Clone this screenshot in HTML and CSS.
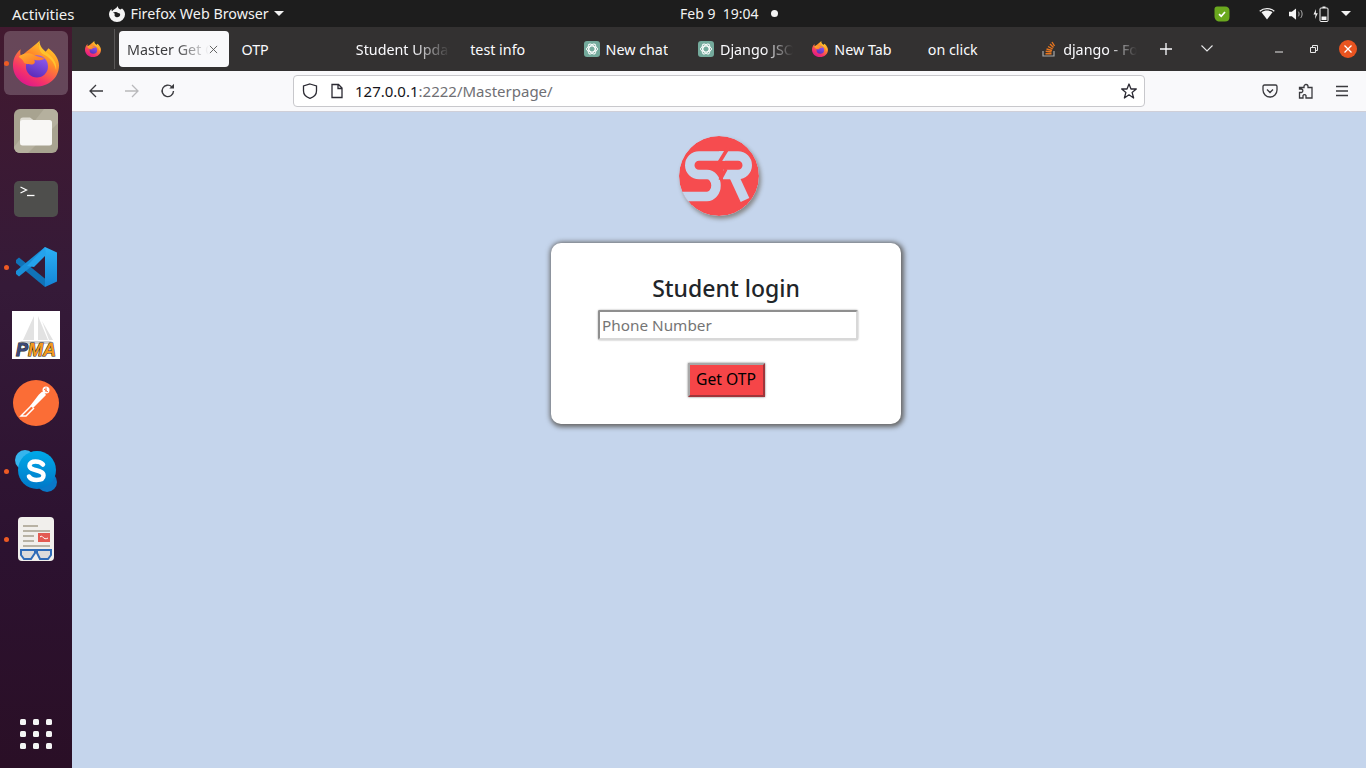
FILE: index.html
```html
<!DOCTYPE html>
<html lang="en">
<head>
    <meta charset="UTF-8">
    <title>Master Get OTP</title>
    <link rel="stylesheet" href="styles.css">
</head>
<body>
    <svg class="icon-defs" aria-hidden="true">
        <defs>
            <linearGradient id="fxBody" x1="0.85" y1="0" x2="0.25" y2="1">
                <stop offset="0" stop-color="#ffe226"/>
                <stop offset="0.4" stop-color="#ff8a2b"/>
                <stop offset="0.75" stop-color="#f5336a"/>
                <stop offset="1" stop-color="#d9158f"/>
            </linearGradient>
            <linearGradient id="fxGlobe" x1="0.7" y1="0" x2="0.3" y2="1">
                <stop offset="0" stop-color="#8f5cf0"/>
                <stop offset="1" stop-color="#5a2bb8"/>
            </linearGradient>
            <linearGradient id="fxTail" x1="0" y1="0" x2="1" y2="1">
                <stop offset="0" stop-color="#ffb52e"/>
                <stop offset="1" stop-color="#ff6a2b"/>
            </linearGradient>
            <linearGradient id="vsDark" x1="0" y1="0" x2="0" y2="1">
                <stop offset="0" stop-color="#2bb0f5"/>
                <stop offset="1" stop-color="#1484d6"/>
            </linearGradient>
            <linearGradient id="skypeBg" x1="0" y1="0" x2="0" y2="1">
                <stop offset="0" stop-color="#00a9e8"/>
                <stop offset="1" stop-color="#0078c8"/>
            </linearGradient>
            <symbol id="firefox" viewBox="0 0 48 48">
                <path fill="url(#fxBody)" d="M28 0C25 6 29 10 33 13L37 8C44 13 48 20 48 26C48 39 37 48 24 48C10 48 0 38 0 26C0 20 2 14 8 9C7 13 8 16 9 17C12 12 20 8 28 0Z"/>
                <path fill="#ffc22e" d="M28 0C27 6 32 10 37 14C43 19 46 24 45 31C43 22 38 17 31 14C27 11 26 5 28 0Z"/>
                <circle cx="25" cy="27" r="11.5" fill="url(#fxGlobe)"/>
                <path fill="url(#fxTail)" d="M6 17C10 13 17 12 22 15C26 17 31 17 33 19C29 21 25 21 22 20C24 23 22 25 19 25C15 25 11 24 11 22C10 20 7 18 6 17Z"/>
            </symbol>
            <symbol id="chatgpt" viewBox="0 0 16 16">
                <rect width="16" height="16" rx="3" fill="#74aa9c"/>
                <g fill="none" stroke="#fff" stroke-width="1">
                    <ellipse cx="8" cy="8" rx="5.5" ry="3"/>
                    <ellipse cx="8" cy="8" rx="5.5" ry="3" transform="rotate(60 8 8)"/>
                    <ellipse cx="8" cy="8" rx="5.5" ry="3" transform="rotate(120 8 8)"/>
                </g>
            </symbol>
        </defs>
    </svg>

    <header class="topbar">
        <span class="activities">Activities</span>
        <div class="app-menu">
            <svg class="app-glyph" viewBox="0 0 16 16"><path fill="#f4f4f4" d="M9 0C8.500 2 10 3 11.500 3.500L13 2.500C15 4 16 6 16 8.500A8 7.500 0 0 1 0 8.500C0 6.500 .8 4.500 2.500 3C2.400 4 2.600 4.800 3 5.200C4.500 3.500 7 2.500 9 0Z"/><path fill="#1d1d1d" d="M4 6.500C6 5.500 8 6 9 7C11 7 11.500 8 11 9.500C10.500 11 8.500 11.500 7 11C5.500 10.500 5 8.500 6 8C5.500 7.500 4.800 7 4 6.500Z"/></svg>
            <span>Firefox Web Browser</span>
            <i class="caret"></i>
        </div>
        <div class="clock"><span>Feb 9&nbsp;&nbsp;19:04</span><i class="clock-dot"></i></div>
        <div class="tray">
            <svg class="tray-shield" viewBox="0 0 16 16"><path fill="#6aa81e" d="M3 .5H11C14 .5 15.500 2 15.500 5V11C15.500 14 14 15.500 11 15.500H6C2.500 15.500 .5 13.500 .5 10V3C.5 1.500 1.500 .5 3 .5Z"/><path fill="none" stroke="#fff" stroke-width="1.700" d="M5 8.200L7.200 10.200L11 6"/></svg>
            <svg class="tray-wifi" viewBox="0 0 16 14"><path fill="none" stroke="#f4f4f4" stroke-width="1.300" d="M.7 4.200C4.800 .7 11.200 .7 15.300 4.200"/><path fill="#f4f4f4" d="M2.500 5.300C5.800 2.800 10.200 2.800 13.500 5.300L8 12.500Z"/></svg>
            <svg class="tray-vol" viewBox="0 0 16 14"><path fill="#f4f4f4" d="M0 4.500H3L7.500 1V13L3 9.500H0Z"/><path fill="none" stroke="#b5b5b5" stroke-width="1" d="M10 4.500C11 6 11 8 10 9.500M12.500 2.800C14.500 5 14.500 9 12.500 11.200"/></svg>
            <svg class="tray-batt" viewBox="0 0 16 16"><path fill="#f4f4f4" d="M3 3L.5 8.500H2.500L2 13L4.800 7.200H2.800Z"/><rect x="7" y="2" width="8" height="13.500" rx="1" fill="none" stroke="#f4f4f4"/><rect x="9.500" y=".5" width="3" height="1.500" fill="#f4f4f4"/><rect x="8.500" y="10.500" width="5" height="3.500" fill="#f4f4f4"/></svg>
            <i class="caret"></i>
        </div>
    </header>

    <div class="desktop">
        <nav class="dock">
            <div class="dock-item active">
                <i class="run-dot"></i>
                <svg class="ic-firefox"><use href="#firefox"/></svg>
            </div>
            <div class="dock-item">
                <svg class="ic-files" viewBox="0 0 44 44">
                    <rect width="44" height="44" rx="6" fill="#a8a390"/>
                    <path d="M30 0H38A6 6 0 0 1 44 6V14L14 44H6A6 6 0 0 1 0 38Z" fill="#b5b09e"/>
                    <path fill="#dedbd2" d="M6 12C6 9.500 7 8.500 9 8.500H16L20 11.500V20H6Z"/>
                    <rect x="6" y="11" width="32" height="25.500" rx="2.500" fill="#f8f7f5"/>
                </svg>
            </div>
            <div class="dock-item">
                <svg class="ic-term" viewBox="0 0 44 36">
                    <rect width="44" height="36" rx="5" fill="#4e4e4c"/>
                    <path d="M6.500 6L12.500 9L6.500 12" fill="none" stroke="#fff" stroke-width="1.300"/>
                    <path d="M13 14.500H20.500" stroke="#fff" stroke-width="1.300"/>
                </svg>
            </div>
            <div class="dock-item">
                <i class="run-dot"></i>
                <svg class="ic-code" viewBox="0 0 42 42">
                    <path fill="#1073b8" d="M1 14L4 11.500L31 33.500L30 41L1 17Z"/>
                    <path fill="#1a8fd8" d="M1 28L4 30.500L31 8.500L30 1L1 25Z"/>
                    <path fill="url(#vsDark)" d="M30 41L42 35.500V6.500L30 1Z"/>
                    <path fill="#24a2ec" d="M30 1L12 20L19 21L31 9Z"/>
                </svg>
            </div>
            <div class="dock-item">
                <svg class="ic-pma" viewBox="0 0 48 48">
                    <rect width="48" height="48" fill="#fff"/>
                    <path fill="#e2e2e2" d="M22 5L11 29H22ZM26 5L36 29H26ZM30 10L41 29H37Z"/>
                    <path fill="#cfcfcf" d="M8 30H40L37 33H11Z"/>
                    <text class="pma-text" x="24" y="45" text-anchor="middle"><tspan fill="#3d4a78">P</tspan><tspan fill="#f29a1f">MA</tspan></text>
                </svg>
            </div>
            <div class="dock-item">
                <svg class="ic-postman" viewBox="0 0 46 46">
                    <circle cx="23" cy="23" r="23" fill="#fb6d36"/>
                    <path fill="#fff" d="M24 17C27 13 29 11 31 12L33 15L20 28L17 26Z"/>
                    <path fill="none" stroke="#fff" stroke-width="1.500" d="M18 26L10 34L8 36H13L21 28"/>
                    <circle cx="33" cy="10" r="3.500" fill="#fff"/>
                    <path fill="none" stroke="#fb6d36" d="M31 9L35 12M33 7.500V12"/>
                </svg>
            </div>
            <div class="dock-item">
                <i class="run-dot"></i>
                <svg class="ic-skype" viewBox="0 0 42 42">
                    <circle cx="10" cy="10" r="10" fill="#36b5ee"/>
                    <circle cx="32" cy="32" r="10" fill="#0a78c8"/>
                    <circle cx="22" cy="20" r="19" fill="url(#skypeBg)"/>
                    <path fill="none" stroke="#fff" stroke-width="4.500" stroke-linecap="round" d="M28 14.500C26 12 23 11.500 20.500 11.500C17 11.500 14.500 13 14.500 15.800C14.500 21.500 28.500 19 28.500 25.500C28.500 28.500 25.500 30 21.500 30C18 30 15.500 29 14 26.500"/>
                </svg>
            </div>
            <div class="dock-item">
                <i class="run-dot"></i>
                <svg class="ic-reader" viewBox="0 0 36 44">
                    <rect width="36" height="44" rx="4" fill="#f1efec"/>
                    <path stroke="#b8b2a4" stroke-width="1.800" d="M5 9H20M5 14H32M5 19H16M5 24H16M5 29H32"/>
                    <rect x="20" y="16" width="12" height="9" fill="#e25a52"/>
                    <path fill="none" stroke="#fff" d="M22 20C25 17 25 24 30 21"/>
                    <path fill="#dcdcdc" d="M3 33H17V36L14 42H6L3 38ZM19 33H33V38L30 42H22L19 36Z"/>
                    <path fill="none" stroke="#2f6cb8" stroke-width="2" d="M2 33H34M3 33V38L6 42H13L17 36V33M19 33V36L22 42H30L33 38V33"/>
                </svg>
            </div>
            <div class="app-grid">
                <i></i><i></i><i></i><i></i><i></i><i></i><i></i><i></i><i></i>
            </div>
        </nav>

        <div class="browser">
            <div class="tabbar">
                <div class="fx-btn"><svg class="fav"><use href="#firefox"/></svg></div>
                <div class="tabs">
                    <div class="tab current"><span class="tab-title fade">Master Get OTP</span>
                        <svg class="tab-close" viewBox="0 0 10 10"><path d="M1 1L9 9M9 1L1 9" stroke="#555" stroke-width="1"/></svg>
                    </div>
                    <div class="tab"><span class="tab-title">OTP</span></div>
                    <div class="tab"><span class="tab-title fade">Student Update</span></div>
                    <div class="tab"><span class="tab-title">test info</span></div>
                    <div class="tab"><svg class="fav"><use href="#chatgpt"/></svg><span class="tab-title">New chat</span></div>
                    <div class="tab"><svg class="fav"><use href="#chatgpt"/></svg><span class="tab-title fade">Django JSON</span></div>
                    <div class="tab"><svg class="fav"><use href="#firefox"/></svg><span class="tab-title">New Tab</span></div>
                    <div class="tab"><span class="tab-title">on click</span></div>
                    <div class="tab"><svg class="fav" viewBox="0 0 16 16"><path fill="none" stroke="#a8a8a8" stroke-width="1.200" d="M2 10V15H13V10"/><path fill="none" stroke="#e8761f" stroke-width="1.400" d="M4.500 12.700H10.500M4.700 10.300L10.500 11M5.500 8L11 9.500M7 5.500L11.700 8M9 3L12.500 6.500M11 1L13.500 5"/></svg><span class="tab-title fade">django - Forms</span></div>
                </div>
                <svg class="tab-plus" viewBox="0 0 12 12"><path d="M6 0V12M0 6H12" stroke="#fbfbfe" stroke-width="1.300"/></svg>
                <svg class="tab-list" viewBox="0 0 12 7"><path d="M.5 .5L6 6L11.500 .5" fill="none" stroke="#e8e8ea" stroke-width="1.100"/></svg>
                <div class="win-btns">
                    <svg class="win-min" viewBox="0 0 8 2"><path d="M0 1H8" stroke="#e8e8e8"/></svg>
                    <svg class="win-max" viewBox="0 0 8 8"><path d="M.5 2.500H5.500V7.500H.5ZM2.500 2.500V.5H7.500V5.500H5.500" fill="none" stroke="#e8e8e8"/></svg>
                    <div class="win-close"><svg viewBox="0 0 8 8"><path d="M.5 .5L7.500 7.500M7.500 .5L.5 7.500" stroke="#fff" stroke-width="1.300"/></svg></div>
                </div>
            </div>

            <div class="toolbar">
                <div class="nav-btns">
                    <svg viewBox="0 0 16 16"><path d="M15 8H2M8 2L2 8L8 14" fill="none" stroke="#3a3a3e" stroke-width="1.300"/></svg>
                    <svg viewBox="0 0 16 16"><path d="M1 8H14M8 2L14 8L8 14" fill="none" stroke="#b9b9bb" stroke-width="1.300"/></svg>
                    <svg viewBox="0 0 16 16"><path d="M13.500 8A5.700 5.700 0 1 1 11.800 3.800" fill="none" stroke="#3a3a3e" stroke-width="1.400"/><path d="M14 .8V5.500H9.300Z" fill="#3a3a3e"/></svg>
                </div>
                <div class="urlbar">
                    <svg class="url-ic" viewBox="0 0 16 16"><path d="M8 1L14.500 3V8C14.500 11.500 12 14 8 15.300C4 14 1.500 11.500 1.500 8V3Z" fill="none" stroke="#2b2a33" stroke-width="1.300"/></svg>
                    <svg class="url-ic" viewBox="0 0 16 16"><path d="M3 1.500H9.500L13 5V14.500H3ZM9 1.500V5.500H13" fill="none" stroke="#2b2a33" stroke-width="1.300"/></svg>
                    <span class="url-text"><b>127.0.0.1</b>:2222/Masterpage/</span>
                    <svg class="url-star" viewBox="0 0 16 16"><path d="M8 1L10 6H15.300L11.100 9.400L12.600 15L8 11.800L3.400 15L4.900 9.400L.7 6H6Z" fill="none" stroke="#2b2a33" stroke-width="1.300" stroke-linejoin="round"/></svg>
                </div>
                <div class="tool-btns">
                    <svg viewBox="0 0 16 16"><path d="M2.500 2H13.500C14.500 2 15 2.500 15 3.500V7A7 7 0 0 1 1 7V3.500C1 2.500 1.500 2 2.500 2ZM5 6.500L8 9.500L11 6.500" fill="none" stroke="#3a3a3e" stroke-width="1.300"/></svg>
                    <svg viewBox="0 0 16 16"><path d="M6 3.500A2 2 0 0 1 10 3.500V4.500H14V15H8V12.500A1.700 1.700 0 0 0 5 12.500V15H1.500V9.500H3.500A1.800 1.800 0 0 0 3.500 6H1.500V4.500H6Z" fill="none" stroke="#3a3a3e" stroke-width="1.300"/></svg>
                    <svg viewBox="0 0 16 16"><path d="M2 3.500H14M2 8H14M2 12.500H14" stroke="#3a3a3e" stroke-width="1.300"/></svg>
                </div>
            </div>

            <main class="page">
                <svg class="logo" viewBox="0 0 80 80">
                    <circle cx="40" cy="40" r="40" fill="#f64c4f"/>
                    <g fill="none" stroke="#c5d5ec" stroke-width="9.500">
                        <path d="M46 20H20A9.250 9.250 0 0 0 20 38.500H28A9 11 0 0 1 28 60.500H3"/>
                        <path d="M40 20H59A9.250 9.250 0 0 1 59 38.500H44"/>
                        <path d="M54 38L66 64"/>
                    </g>
                    <path d="M49 12L38 30" stroke="#f64c4f" stroke-width="3.500"/>
                    <path d="M47 33L41 44" stroke="#f64c4f" stroke-width="3.500"/>
                </svg>
                <form class="login-card">
                    <h2 class="login-title">Student login</h2>
                    <input class="phone-input" type="text" placeholder="Phone Number">
                    <button class="otp-btn" type="button">Get OTP</button>
                </form>
            </main>
        </div>
    </div>
</body>
</html>
```

FILE: styles.css
```css
* {
    box-sizing: border-box;
}
html, body {
    height: 100%;
}
body {
    margin: 0;
    display: flex;
    flex-direction: column;
    height: 768px;
    overflow: hidden;
    font-family: "Noto Sans", sans-serif;
    background-color: #1d1d1d;
}
.icon-defs {
    position: absolute;
    width: 0;
    height: 0;
}

/* top bar */
.topbar {
    height: 27px;
    flex: none;
    display: flex;
    align-items: center;
    background-color: #1d1d1d;
    color: #f2f2f2;
    font-size: 14.300px;
    position: relative;
}
.activities {
    margin-left: 12px;
    font-size: 15px;
}
.app-menu {
    margin-left: 34px;
    display: flex;
    align-items: center;
}
.app-glyph {
    width: 16px;
    height: 16px;
    margin-right: 6px;
}
.caret {
    display: inline-block;
    width: 0;
    height: 0;
    border-left: 5px solid transparent;
    border-right: 5px solid transparent;
    border-top: 5px solid #f2f2f2;
}
.app-menu .caret {
    margin-left: 5px;
}
.clock {
    position: absolute;
    left: 680px;
    display: flex;
    align-items: center;
    font-size: 14px;
}
.clock-dot {
    width: 7px;
    height: 7px;
    border-radius: 50%;
    background-color: #f4f4f4;
    margin-left: 13px;
}
.tray {
    margin-left: auto;
    display: flex;
    align-items: center;
    padding-right: 15px;
}
.tray-shield {
    width: 16px;
    height: 16px;
    margin-right: 29px;
}
.tray-wifi {
    width: 16px;
    height: 14px;
    margin-right: 14px;
}
.tray-vol {
    width: 15px;
    height: 14px;
    margin-right: 9px;
}
.tray-batt {
    width: 16px;
    height: 16px;
    margin-right: 12px;
}

/* dock */
.desktop {
    flex: 1;
    display: flex;
    min-height: 0;
}
.dock {
    width: 72px;
    flex: none;
    display: flex;
    flex-direction: column;
    padding-top: 2px;
    background: linear-gradient(180deg, #42192f 0%, #351a38 35%, #2c1230 70%, #2a0f26 100%);
}
.dock-item {
    height: 68px;
    flex: none;
    margin: 0 4px;
    display: flex;
    align-items: center;
    justify-content: center;
    position: relative;
    border-radius: 6px;
}
.dock-item.active {
    background-color: rgba(255, 255, 255, 0.2);
    height: 64px;
    margin-top: 2px;
    margin-bottom: 2px;
}
.run-dot {
    position: absolute;
    left: 0;
    top: 50%;
    margin-top: -2.5px;
    width: 5px;
    height: 5px;
    border-radius: 50%;
    background-color: #ed5a24;
}
.ic-firefox {
    width: 46px;
    height: 47px;
}
.ic-files {
    width: 44px;
    height: 44px;
}
.ic-term {
    width: 44px;
    height: 36px;
}
.ic-code {
    width: 42px;
    height: 42px;
}
.ic-pma {
    width: 48px;
    height: 48px;
}
.pma-text {
    font-family: "Liberation Sans", sans-serif;
    font-size: 18px;
    font-weight: bold;
    font-style: italic;
    stroke: #1c1c22;
    stroke-width: 1px;
    paint-order: stroke;
}
.ic-postman {
    width: 46px;
    height: 46px;
}
.ic-skype {
    width: 42px;
    height: 42px;
}
.ic-reader {
    width: 36px;
    height: 44px;
}
.app-grid {
    margin: auto 0 19px 20px;
    width: 32px;
    display: grid;
    grid-template-columns: repeat(3, 6px);
    gap: 6px 7px;
}
.app-grid i {
    width: 6px;
    height: 6px;
    border-radius: 1.500px;
    background-color: #f4f4f4;
}

/* browser chrome */
.browser {
    flex: 1;
    min-width: 0;
    display: flex;
    flex-direction: column;
}
.tabbar {
    height: 44px;
    flex: none;
    display: flex;
    align-items: center;
    background-color: #333131;
    font-size: 14.300px;
    color: #fbfbfe;
}
.fx-btn {
    width: 43px;
    height: 40px;
    flex: none;
    display: flex;
    align-items: center;
    justify-content: center;
    border-right: 1px solid #5a5858;
}
.fav {
    width: 16px;
    height: 16px;
    flex: none;
    margin-left: -1px;
    margin-right: 6px;
}
.fx-btn .fav {
    margin: 0;
}
.tabs {
    margin-left: 2px;
    display: flex;
}
.tab {
    width: 114.400px;
    height: 36px;
    flex: none;
    display: flex;
    align-items: center;
    padding: 0 10px;
    white-space: nowrap;
}
.tab-title {
    overflow: hidden;
}
.tab-title.fade {
    -webkit-mask-image: linear-gradient(90deg, #000 60%, transparent 100%);
    mask-image: linear-gradient(90deg, #000 60%, transparent 100%);
}
.tab.current {
    width: 110px;
    margin: 0 2.400px 0 2px;
    padding: 0 11px 0 8px;
    background-color: #f9f9fb;
    color: #3d3d3f;
    border-radius: 4px;
}
.tab-close {
    width: 9px;
    height: 9px;
    flex: none;
    margin-left: auto;
}
.tab-plus {
    width: 12px;
    height: 12px;
    flex: none;
    margin-left: 13px;
}
.tab-list {
    width: 12px;
    height: 7px;
    flex: none;
    margin-left: 29px;
    margin-top: -2px;
}
.win-btns {
    margin-left: auto;
    display: flex;
    align-items: center;
    padding-right: 9px;
}
.win-min {
    width: 8px;
    height: 2px;
    margin-top: 5px;
    margin-right: 27px;
}
.win-max {
    width: 8px;
    height: 8px;
    margin-right: 21px;
}
.win-close {
    width: 18px;
    height: 18px;
    border-radius: 50%;
    background-color: #e95420;
    display: flex;
    align-items: center;
    justify-content: center;
}
.win-close svg {
    width: 8px;
    height: 8px;
}

.toolbar {
    height: 41px;
    flex: none;
    display: flex;
    align-items: center;
    background-color: #f9f9fb;
    border-bottom: 1px solid #cfcfd8;
    padding-bottom: 1px;
}
.nav-btns {
    display: flex;
    gap: 20px;
    margin-left: 16px;
    width: 205px;
}
.nav-btns svg, .tool-btns svg {
    width: 16px;
    height: 16px;
}
.urlbar {
    width: 852px;
    height: 32px;
    flex: none;
    display: flex;
    align-items: center;
    background-color: #fff;
    border: 1px solid #c8c8cc;
    border-radius: 4px;
    padding: 0 7px 0 8px;
    font-size: 15px;
    color: #6f6f74;
}
.url-ic {
    width: 16px;
    height: 16px;
    margin-right: 11px;
}
.url-ic + .url-ic {
    margin-right: 10px;
}
.url-text b {
    font-weight: normal;
    color: #15141a;
}
.url-star {
    width: 16px;
    height: 16px;
    margin-left: auto;
}
.tool-btns {
    display: flex;
    gap: 20px;
    margin-left: 117px;
}

/* page */
.page {
    flex: 1;
    background-color: #c5d5ec;
    display: flex;
    flex-direction: column;
    align-items: center;
}
.logo {
    width: 80px;
    height: 80px;
    margin-top: 24px;
    border-radius: 50%;
    box-shadow: 2px 3px 4px #888;
}
.login-card {
    width: 350px;
    height: 181px;
    margin-top: 27px;
    margin-left: 14px;
    background-color: #fff;
    border-radius: 10px;
    box-shadow: 1px 1px 5px 2px #666;
    display: flex;
    flex-direction: column;
    align-items: center;
    padding-top: 28px;
}
.login-title {
    margin: 0;
    font-size: 23px;
    line-height: 34px;
    font-weight: 500;
    color: #212529;
}
.phone-input {
    width: 260px;
    height: 30px;
    margin: 5px 0 0 4px;
    padding: 1px 2px;
    border-style: solid;
    border-width: 2px;
    border-color: #8f8f8f #d8d8d8 #d8d8d8 #8f8f8f;
    box-shadow: 0 0 2px #999;
    font-family: "Noto Sans", sans-serif;
    font-size: 15.300px;
    border-radius: 2px;
}
.phone-input::placeholder {
    color: #757575;
}
.otp-btn {
    width: 77px;
    height: 34px;
    margin-top: 23px;
    background-color: #f64548;
    border-style: solid;
    border-width: 2px;
    border-color: #a8a8a8 #a0353a #a0353a #a8a8a8;
    box-shadow: 0 0 2px #777;
    font-family: "Noto Sans", sans-serif;
    font-size: 15.700px;
    line-height: 26px;
    color: #000;
    padding: 0 0 2px;
}
```
